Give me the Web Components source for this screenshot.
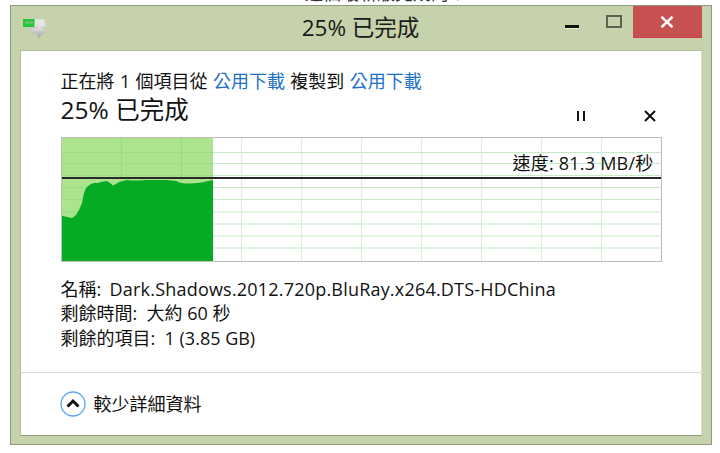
<!DOCTYPE html>
<html><head><meta charset="utf-8"><style>
html,body{margin:0;padding:0;background:#fff;width:720px;height:453px;overflow:hidden}
body{font-family:"Open Sans","Noto Sans CJK TC",sans-serif;color:#111}
</style></head><body>
<top-strip>這個最新版完成的？</top-strip>
<copy-window title-text="25% 已完成">
  <progress-head slot="main"></progress-head>
  <speed-chart slot="main"></speed-chart>
  <detail-list slot="main"></detail-list>
  <less-details slot="foot"></less-details>
</copy-window>
<script>
const FONT='"Open Sans","Noto Sans CJK TC",sans-serif';
customElements.define('top-strip',class extends HTMLElement{
 connectedCallback(){const s=this.attachShadow({mode:'open'});s.innerHTML=`<style>
 :host{display:block;height:5px;overflow:hidden;font-family:${FONT};font-size:18px;line-height:24px;color:#333;padding-left:305px;box-sizing:border-box;white-space:nowrap}
 div{margin-top:-19px}
 </style><div><slot></slot></div>`;}
});
customElements.define('copy-window',class extends HTMLElement{
 connectedCallback(){const s=this.attachShadow({mode:'open'});s.innerHTML=`<style>
 :host{display:flex;flex-direction:column;width:702px;height:440px;margin:0 0 0 9.500px;box-sizing:border-box;background:#c6d2ab;border:1px solid #8f9a7c;padding:0 9px 8px 9px;font-family:${FONT}}
 .bar{height:44px;flex:none;display:grid;grid-template-columns:1fr auto 1fr;align-items:start}
 .ico{width:24px;height:19px;margin:13px 0 0 3.500px;display:block}
 .title{font-size:22.500px;line-height:28px;margin-top:8px;color:#1a1a1a;white-space:nowrap}
 .ctl{display:flex;justify-content:flex-end;align-items:flex-start}
 .btn{display:flex;align-items:center;justify-content:center}
 .min{width:46px;height:32px}.max{width:38px;height:32px}
 .close{width:69px;height:32px;background:#c75050;border-bottom:1px solid #d33c4c;box-sizing:border-box}
 .client{flex:1;background:#fff;border:1px solid #b3bd9a;border-right-color:#d8dfc6;border-bottom-color:#8f9a7c;display:flex;flex-direction:column;min-height:0}
 .main{flex:1;padding:18px 40px 0 40px;display:flex;flex-direction:column}
 .foot{height:62px;flex:none;border-top:1px solid #d6d6d6;display:flex;align-items:center;padding-left:39px}
 </style>
 <div class="bar">
  <svg class="ico" viewBox="0 0 24 19"><defs><linearGradient id="a" x1="0" y1="0" x2="0" y2="1"><stop offset="0" stop-color="#f7f7f7"/><stop offset="1" stop-color="#a4a4a4"/></linearGradient></defs>
   <rect x="0" y="0" width="22" height="8" fill="#e6e6e6" stroke="#c8c8c8" stroke-width=".6"/>
   <rect x="0" y="0" width="11.500" height="8" fill="#22c934"/><rect x="2" y="2.500" width="8" height="2" fill="#7fbf7f"/>
   <path d="M7 9h7.500V5l8.500 7-7 6.500-1.500 0V14.500H9.500z" fill="url(#a)" stroke="#c2c2c2" stroke-width=".6"/></svg>
  <div class="title">${this.getAttribute('title-text')}</div>
  <div class="ctl">
   <div class="btn min"><svg width="14" height="4" viewBox="0 0 14 4" style="margin-top:10px"><rect y="0" width="14" height="3" fill="#111"/><rect y="3" width="14" height="1" fill="#eef2d8"/></svg></div>
   <div class="btn max"><svg width="16" height="13" viewBox="0 0 16 13" style="margin-top:-1px"><rect x="1" y="1" width="14" height="11" fill="none" stroke="#5a6350" stroke-width="2"/></svg></div>
   <div class="btn close"><svg width="14" height="12" viewBox="0 0 14 12"><path d="M1.500 .8 12.500 11.200M12.500 .8 1.500 11.200" stroke="#fff" stroke-width="2.400" fill="none"/></svg></div>
  </div>
 </div>
 <div class="client"><div class="main"><slot name="main"></slot></div><div class="foot"><slot name="foot"></slot></div></div>`;}
});
customElements.define('progress-head',class extends HTMLElement{
 connectedCallback(){const s=this.attachShadow({mode:'open'});s.innerHTML=`<style>
 :host{display:block;font-family:${FONT};height:68px}
 .l1{font-size:18px;line-height:24px;height:24px;white-space:nowrap;color:#111;word-spacing:.7px}
 a{color:#1b6fc9;text-decoration:none}
 .l2{display:flex;align-items:center;height:34px;}
 .pct{font-size:24.500px;line-height:34px;white-space:nowrap;flex:1}
 .act{display:flex;align-items:center;gap:58px;margin:11px 5px 0 0}
 </style>
 <div class="l1">正在將 1 個項目從 <a>公用下載</a> 複製到 <a>公用下載</a></div>
 <div class="l2"><div class="pct">25% 已完成</div>
 <div class="act"><svg width="10" height="10" viewBox="0 0 10 10"><rect x="1" y="0" width="2" height="10" fill="#111"/><rect x="7" y="0" width="2" height="10" fill="#111"/></svg>
 <svg width="12" height="12" viewBox="0 0 12 12"><path d="M1 1 11 11M11 1 1 11" stroke="#111" stroke-width="2" fill="none"/></svg></div></div>`;}
});
customElements.define('speed-chart',class extends HTMLElement{
 connectedCallback(){const s=this.attachShadow({mode:'open'});
 const ys=[14.500,25.500,37.500,49.500,61.500,74,86,98,110];
 let g='';
 for(const y of ys)g+=`<path d="M0 ${y}H600" stroke="#c5eac6" stroke-width="1.200"/>`;
 for(let x=59.500;x<600;x+=60)g+=`<path d="M${x} 0V124" stroke="#d5f0d6" stroke-width="1.200"/>`;
 let h='';
 for(const y of ys)h+=`<path d="M0 ${y}H151" stroke="#9bdc85" stroke-width="1"/>`;
 for(const x of [59.500,119.500])h+=`<path d="M${x} 0V60" stroke="#97d97f" stroke-width="1"/>`;
 const pts="62,216 66,217 71,218 75,215 78,210 81,203 83,193 85,188 87,186 90,184 93,183 97,183 100,182 103,181.500 106,181 109,183 112,185.500 115,184 118,182 122,181 126,180 130,180.500 135,180.500 140,180.500 145,180 150,180 155,180 160,180 165,180 170,180.500 175,181 180,183 185,183.500 190,183.500 197,183 203,182 207,181 212,180".split(' ');
 const scaled=pts.map(p=>{let[a,b]=p.split(',');return `${(+a)-61} ${(+b)-138}`});
 s.innerHTML=`<style>
 :host{display:block;position:relative;width:601px;height:125px;box-sizing:border-box;border:1px solid #bdbdbd;font-family:${FONT}}
 svg{display:block;position:absolute;left:0;top:0}
 .sp{position:absolute;right:7px;top:13px;font-size:18px;line-height:24px;color:#111;white-space:nowrap;letter-spacing:.22px}
 </style>
 <svg width="599" height="123" viewBox="0 0 599 123"><rect width="599" height="123" fill="#fff"/>${g}
 <rect width="151" height="123" fill="#abe38f"/>${h}
 <path d="M0 123V78L${scaled.join('L')}V123Z" fill="#06ab24"/>
 <path d="M0 40H599" stroke="#2a2a2a" stroke-width="2"/></svg>
 <div class="sp">速度: 81.3 MB/秒</div>`;}
});
customElements.define('detail-list',class extends HTMLElement{
 connectedCallback(){const s=this.attachShadow({mode:'open'});s.innerHTML=`<style>
 :host{display:block;font-family:${FONT};font-size:18px;line-height:24.300px;margin-top:15px;color:#111;white-space:nowrap}
 .w{letter-spacing:.2px;margin-left:-1px}
 </style>
 <div>名稱: &nbsp;<span class="w">Dark.Shadows.2012.720p.BluRay.x264.DTS-HDChina</span></div>
 <div>剩餘時間: &nbsp;大約 60 秒</div>
 <div>剩餘的項目: &nbsp;1 (3.85 GB)</div>`;}
});
customElements.define('less-details',class extends HTMLElement{
 connectedCallback(){const s=this.attachShadow({mode:'open'});s.innerHTML=`<style>
 :host{display:flex;align-items:center;gap:8px;font-family:${FONT};font-size:18px;line-height:24px;color:#111;white-space:nowrap;margin-top:-1px}
 </style>
 <svg width="26" height="26" viewBox="0 0 26 26"><circle cx="13" cy="13" r="12" fill="#fff" stroke="#5aa7f0" stroke-width="1.300"/>
 <path d="M7.500 15.500 13 10l5.500 5.500" fill="none" stroke="#111" stroke-width="3"/></svg>
 <span>較少詳細資料</span>`;}
});
</script></body></html>
